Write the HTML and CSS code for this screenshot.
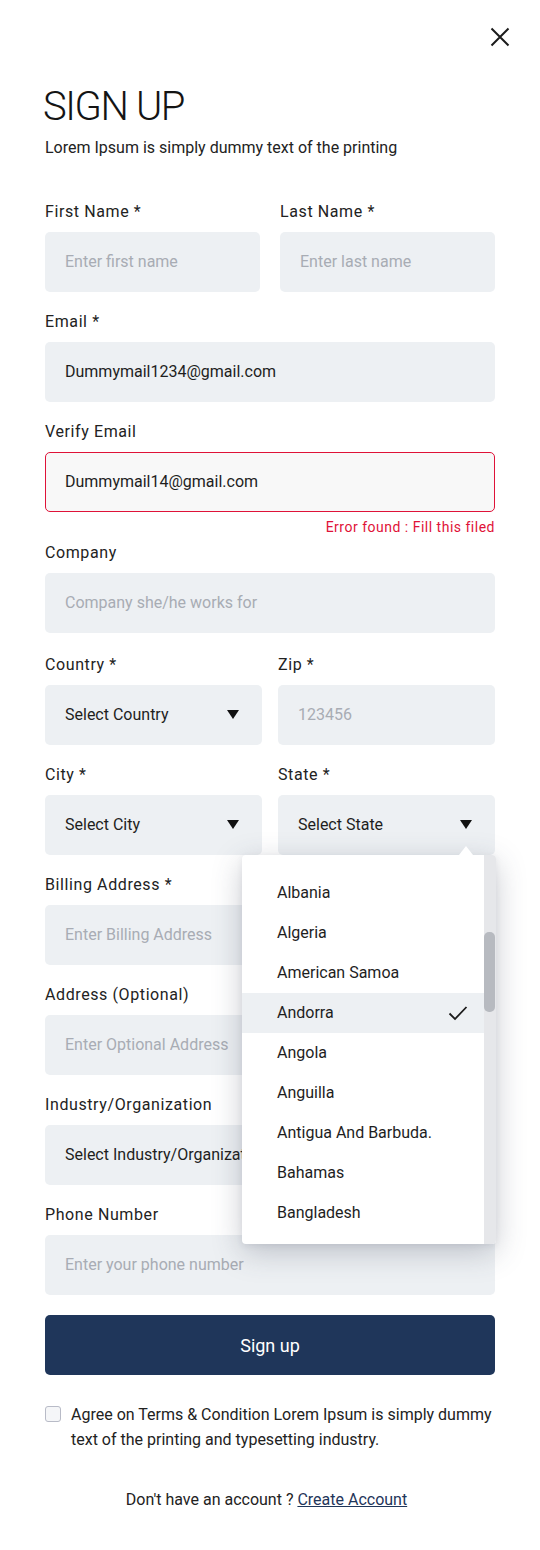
FILE: index.html
```html
<!DOCTYPE html>
<html lang="en">
<head>
<meta charset="utf-8">
<title>Sign Up</title>
<link rel="stylesheet" href="styles.css">
</head>
<body>
<div class="page">
  <div class="topbar">
    <button class="close" aria-label="Close">
      <svg width="20" height="20" viewBox="0 0 20 20"><path d="M1.5 1.5 L18.5 18.5 M18.5 1.5 L1.5 18.5" stroke="#1b1b1b" stroke-width="2" fill="none"/></svg>
    </button>
  </div>
  <h1 class="title">SIGN UP</h1>
  <p class="subtitle">Lorem Ipsum is simply dummy text of the printing</p>

  <form class="form">
    <div class="row">
      <div class="field">
        <label class="label">First Name *</label>
        <div class="input placeholder">Enter first name</div>
      </div>
      <div class="field">
        <label class="label">Last Name *</label>
        <div class="input placeholder">Enter last name</div>
      </div>
    </div>

    <div class="field">
      <label class="label">Email *</label>
      <div class="input">Dummymail1234@gmail.com</div>
    </div>

    <div class="field">
      <label class="label">Verify Email</label>
      <div class="input input-error">Dummymail14@gmail.com</div>
      <div class="error">Error found : Fill this filed</div>
    </div>

    <div class="field">
      <label class="label">Company</label>
      <div class="input placeholder">Company she/he works for</div>
    </div>

    <div class="row row-narrow row-after-company">
      <div class="field">
        <label class="label">Country *</label>
        <div class="input select">Select Country<span class="caret"></span></div>
      </div>
      <div class="field">
        <label class="label">Zip *</label>
        <div class="input placeholder">123456</div>
      </div>
    </div>

    <div class="row row-narrow">
      <div class="field">
        <label class="label">City *</label>
        <div class="input select">Select City<span class="caret"></span></div>
      </div>
      <div class="field">
        <label class="label">State *</label>
        <div class="select-wrap">
          <div class="input select">Select State<span class="caret"></span></div>
          <div class="dropdown">
            <span class="pointer"></span>
            <ul class="options">
              <li>Albania</li>
              <li>Algeria</li>
              <li>American Samoa</li>
              <li class="selected">Andorra
                <svg class="check" width="20" height="16" viewBox="0 0 20 16"><path d="M1.5 8.5 L7 14 L18.5 2" stroke="#1b1b1b" stroke-width="1.8" fill="none"/></svg>
              </li>
              <li>Angola</li>
              <li>Anguilla</li>
              <li>Antigua And Barbuda.</li>
              <li>Bahamas</li>
              <li>Bangladesh</li>
            </ul>
            <div class="scrollbar"><div class="thumb"></div></div>
          </div>
        </div>
      </div>
    </div>

    <div class="field">
      <label class="label">Billing Address *</label>
      <div class="input placeholder">Enter Billing Address</div>
    </div>

    <div class="field">
      <label class="label">Address (Optional)</label>
      <div class="input placeholder">Enter Optional Address</div>
    </div>

    <div class="field">
      <label class="label">Industry/Organization</label>
      <div class="input select">Select Industry/Organization<span class="caret"></span></div>
    </div>

    <div class="field">
      <label class="label">Phone Number</label>
      <div class="input placeholder">Enter your phone number</div>
    </div>

    <button type="button" class="submit">Sign up</button>

    <div class="agree">
      <span class="checkbox"></span>
      <p>Agree on Terms &amp; Condition Lorem Ipsum is simply dummy text of the printing and typesetting industry.</p>
    </div>

    <p class="account">Don't have an account ? <a href="#">Create Account</a></p>
  </form>
</div>
</body>
</html>
```

FILE: styles.css
```css
* { box-sizing: border-box; }

body {
  margin: 0;
  background: #ffffff;
  font-family: Roboto, "Liberation Sans", sans-serif;
  color: #1e1e1e;
}

.page {
  width: 540px;
  padding: 0 45px;
}

.topbar {
  display: flex;
  justify-content: flex-end;
  padding-top: 27px;
  margin-right: -15px;
}

.close {
  background: none;
  border: 0;
  padding: 0;
  width: 20px;
  height: 20px;
  display: block;
}

.title {
  margin: 38px 0 0 -2px;
  font-family: Roboto, sans-serif;
  font-weight: 300;
  font-size: 40px;
  line-height: 44px;
  letter-spacing: -1.4px;
  color: #141414;
}

.subtitle {
  margin: 9px 0 0;
  font-size: 16px;
  line-height: 20px;
  color: #222;
}

.form {
  display: flex;
  flex-direction: column;
  margin-top: 44px;
}

.form > * + * { margin-top: 20px; }
.form > .row-after-company { margin-top: 22px; }

.row {
  display: grid;
  grid-template-columns: 1fr 1fr;
  column-gap: 20px;
}

.row-narrow { column-gap: 16px; }

.field {
  display: flex;
  flex-direction: column;
  min-width: 0;
}

.label {
  font-size: 16px;
  line-height: 20px;
  letter-spacing: 0.6px;
  color: #222;
  margin-bottom: 10px;
}

.input {
  height: 60px;
  background: #edf0f3;
  border-radius: 5px;
  padding: 0 20px 1px;
  display: flex;
  align-items: center;
  font-size: 16px;
  color: #1e1e1e;
  white-space: nowrap;
  overflow: hidden;
}

.placeholder { color: #a8acb4; }

.input-error {
  background: #f8f8f8;
  border: 1px solid #df1238;
  padding: 0 19px 1px;
}

.error {
  align-self: flex-end;
  font-size: 14px;
  line-height: 18px;
  letter-spacing: 0.5px;
  color: #df1238;
  margin: 6px 0 -13px;
}

.select {
  justify-content: space-between;
}

.caret {
  flex: none;
  width: 0;
  height: 0;
  border-left: 6.5px solid transparent;
  border-right: 6.5px solid transparent;
  border-top: 9px solid #111;
  margin-right: 3px;
}

.select-wrap { position: relative; }

.dropdown {
  position: absolute;
  left: -36px;
  top: 60px;
  width: 254px;
  background: #fff;
  border-radius: 4px;
  box-shadow: 0 8px 30px rgba(60, 70, 90, 0.28), 0 2px 6px rgba(60, 70, 90, 0.08);
  z-index: 10;
  display: flex;
}

.pointer {
  position: absolute;
  top: -9px;
  right: 23px;
  width: 0;
  height: 0;
  border-left: 7px solid transparent;
  border-right: 7px solid transparent;
  border-bottom: 9px solid #fff;
}

.options {
  list-style: none;
  margin: 0;
  padding: 18px 0 11px;
  flex: 1;
}

.options li {
  height: 40px;
  display: flex;
  align-items: center;
  justify-content: space-between;
  padding: 0 16px 1px 35px;
  font-size: 16px;
  color: #1e1e1e;
}

.options li.selected { background: #edf0f3; }

.scrollbar {
  width: 12px;
  background: #e6e7ea;
  border-radius: 0 4px 4px 0;
  position: relative;
}

.thumb {
  position: absolute;
  top: 77px;
  left: 0;
  width: 11px;
  height: 80px;
  background: #b7bac0;
  border-radius: 5px;
}

.submit {
  height: 60px;
  margin-top: 20px !important;
  border: 0;
  border-radius: 5px;
  background: #1f365a;
  color: #fff;
  font-family: Roboto, sans-serif;
  font-size: 18px;
  font-weight: 400;
}

.agree {
  display: flex;
  align-items: flex-start;
  gap: 10px;
  margin-top: 27px !important;
}

.checkbox {
  flex: none;
  width: 16px;
  height: 16px;
  border: 1.5px solid #b8bbc7;
  border-radius: 3px;
  background: #f5f6f8;
  margin-top: 4px;
}

.agree p {
  margin: 0;
  font-size: 16px;
  line-height: 25px;
  color: #222;
}

.account {
  margin: 37px 0 0 !important;
  padding-right: 7px;
  text-align: center;
  font-size: 16px;
  line-height: 22px;
  color: #222;
}

.account a {
  color: #1f365a;
  text-decoration: underline;
}
```
